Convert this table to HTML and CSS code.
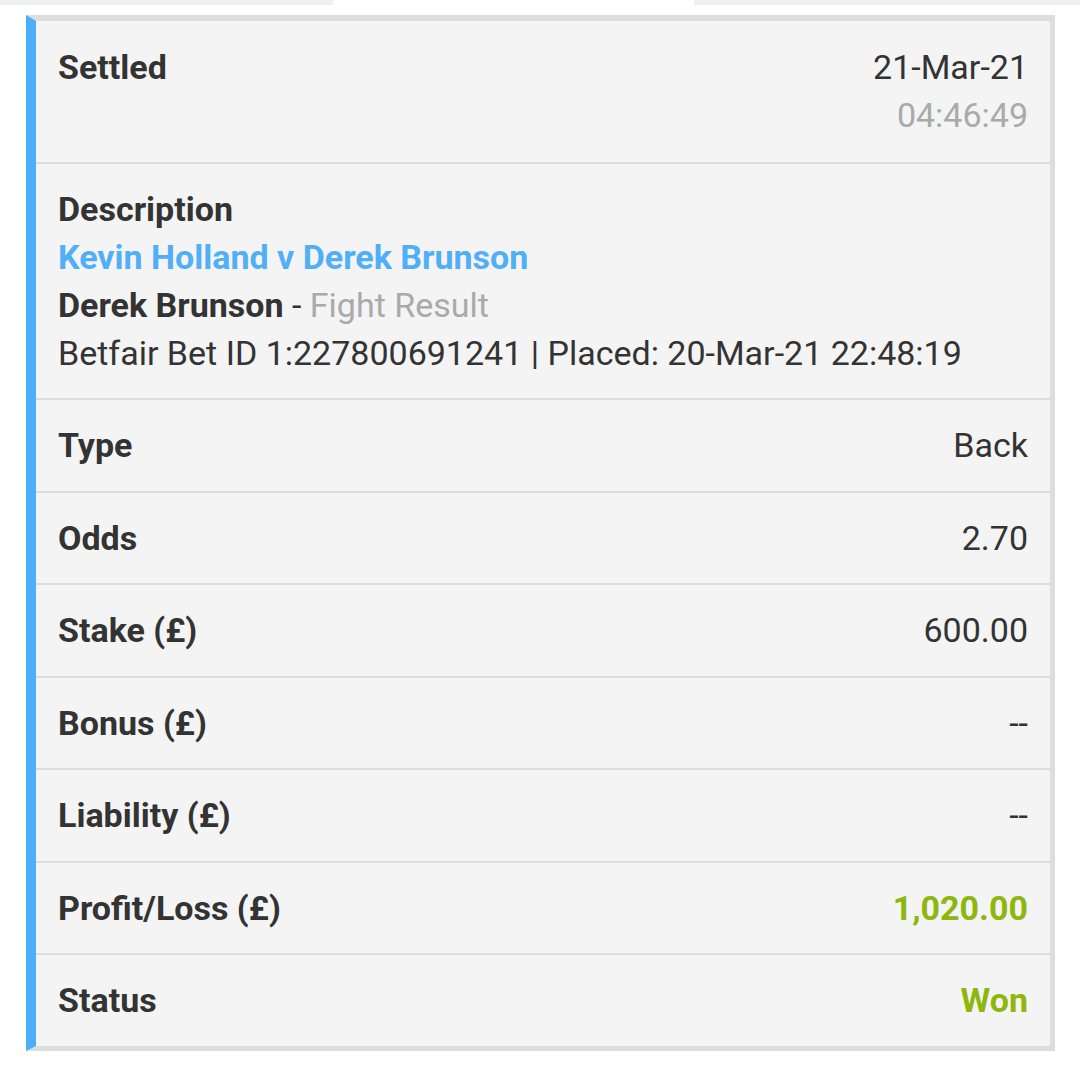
FILE: index.html
```html
<!DOCTYPE html>
<html lang="en">
<head>
    <meta charset="UTF-8">
    <meta name="viewport" content="width=device-width, initial-scale=1.0">
    <title>Bet Details</title>
    <link rel="stylesheet" href="styles.css">
</head>
<body>
    <div class="tabs">
        <div class="tab"></div>
        <div class="tab active"></div>
        <div class="tab"></div>
    </div>

    <div class="bet-card">
        <div class="row settled">
            <span class="label">Settled</span>
            <div class="value">
                <div>21-Mar-21</div>
                <div class="muted">04:46:49</div>
            </div>
        </div>
        <div class="row description">
            <div class="label">Description</div>
            <div class="event">Kevin Holland v Derek Brunson</div>
            <div><strong>Derek Brunson</strong> - <span class="muted">Fight Result</span></div>
            <div>Betfair Bet ID 1:227800691241 | Placed: 20-Mar-21 22:48:19</div>
        </div>
        <div class="row">
            <span class="label">Type</span>
            <span class="value">Back</span>
        </div>
        <div class="row">
            <span class="label">Odds</span>
            <span class="value">2.70</span>
        </div>
        <div class="row">
            <span class="label">Stake (£)</span>
            <span class="value">600.00</span>
        </div>
        <div class="row">
            <span class="label">Bonus (£)</span>
            <span class="value">--</span>
        </div>
        <div class="row">
            <span class="label">Liability (£)</span>
            <span class="value">--</span>
        </div>
        <div class="row">
            <span class="label">Profit/Loss (£)</span>
            <span class="value won">1,020.00</span>
        </div>
        <div class="row">
            <span class="label">Status</span>
            <span class="value won">Won</span>
        </div>
    </div>
</body>
</html>
```

FILE: styles.css
```css
body {
    font-family: 'Roboto', 'Liberation Sans', sans-serif;
    background-color: #ffffff;
    color: #333333;
    margin: 0;
    padding: 0;
    font-size: 34px;
    line-height: 48px;
}
.tabs {
    display: flex;
    height: 5px;
}
.tab {
    width: 333px;
    background-color: #eeeff3;
}
.tab.active {
    width: 361px;
    background-color: #ffffff;
}
.tab:last-child {
    flex: 1;
}
.bet-card {
    margin: 10px 25px 0 26px;
    background-color: #f4f4f4;
    border-top: 6px solid #dddddd;
    border-right: 5px solid #dddddd;
    border-bottom: 5px solid #dddddd;
    border-left: 10px solid #4daefc;
}
.row {
    display: flex;
    justify-content: space-between;
    align-items: flex-start;
    padding: 21.25px 22px 21.25px 22px;
    border-bottom: 2px solid #dddddd;
}
.row.settled {
    padding-top: 22.3px;
    padding-bottom: 22.3px;
}
.row:last-child {
    border-bottom: none;
}
.description {
    display: block;
    padding-top: 21.3px;
    padding-bottom: 21.3px;
}
.label, strong {
    font-weight: bold;
}
.value {
    text-align: right;
}
.muted {
    color: #aaaaaa;
}
.event {
    color: #51aff7;
    font-weight: bold;
}
.won {
    color: #8db70c;
    font-weight: bold;
}
```
